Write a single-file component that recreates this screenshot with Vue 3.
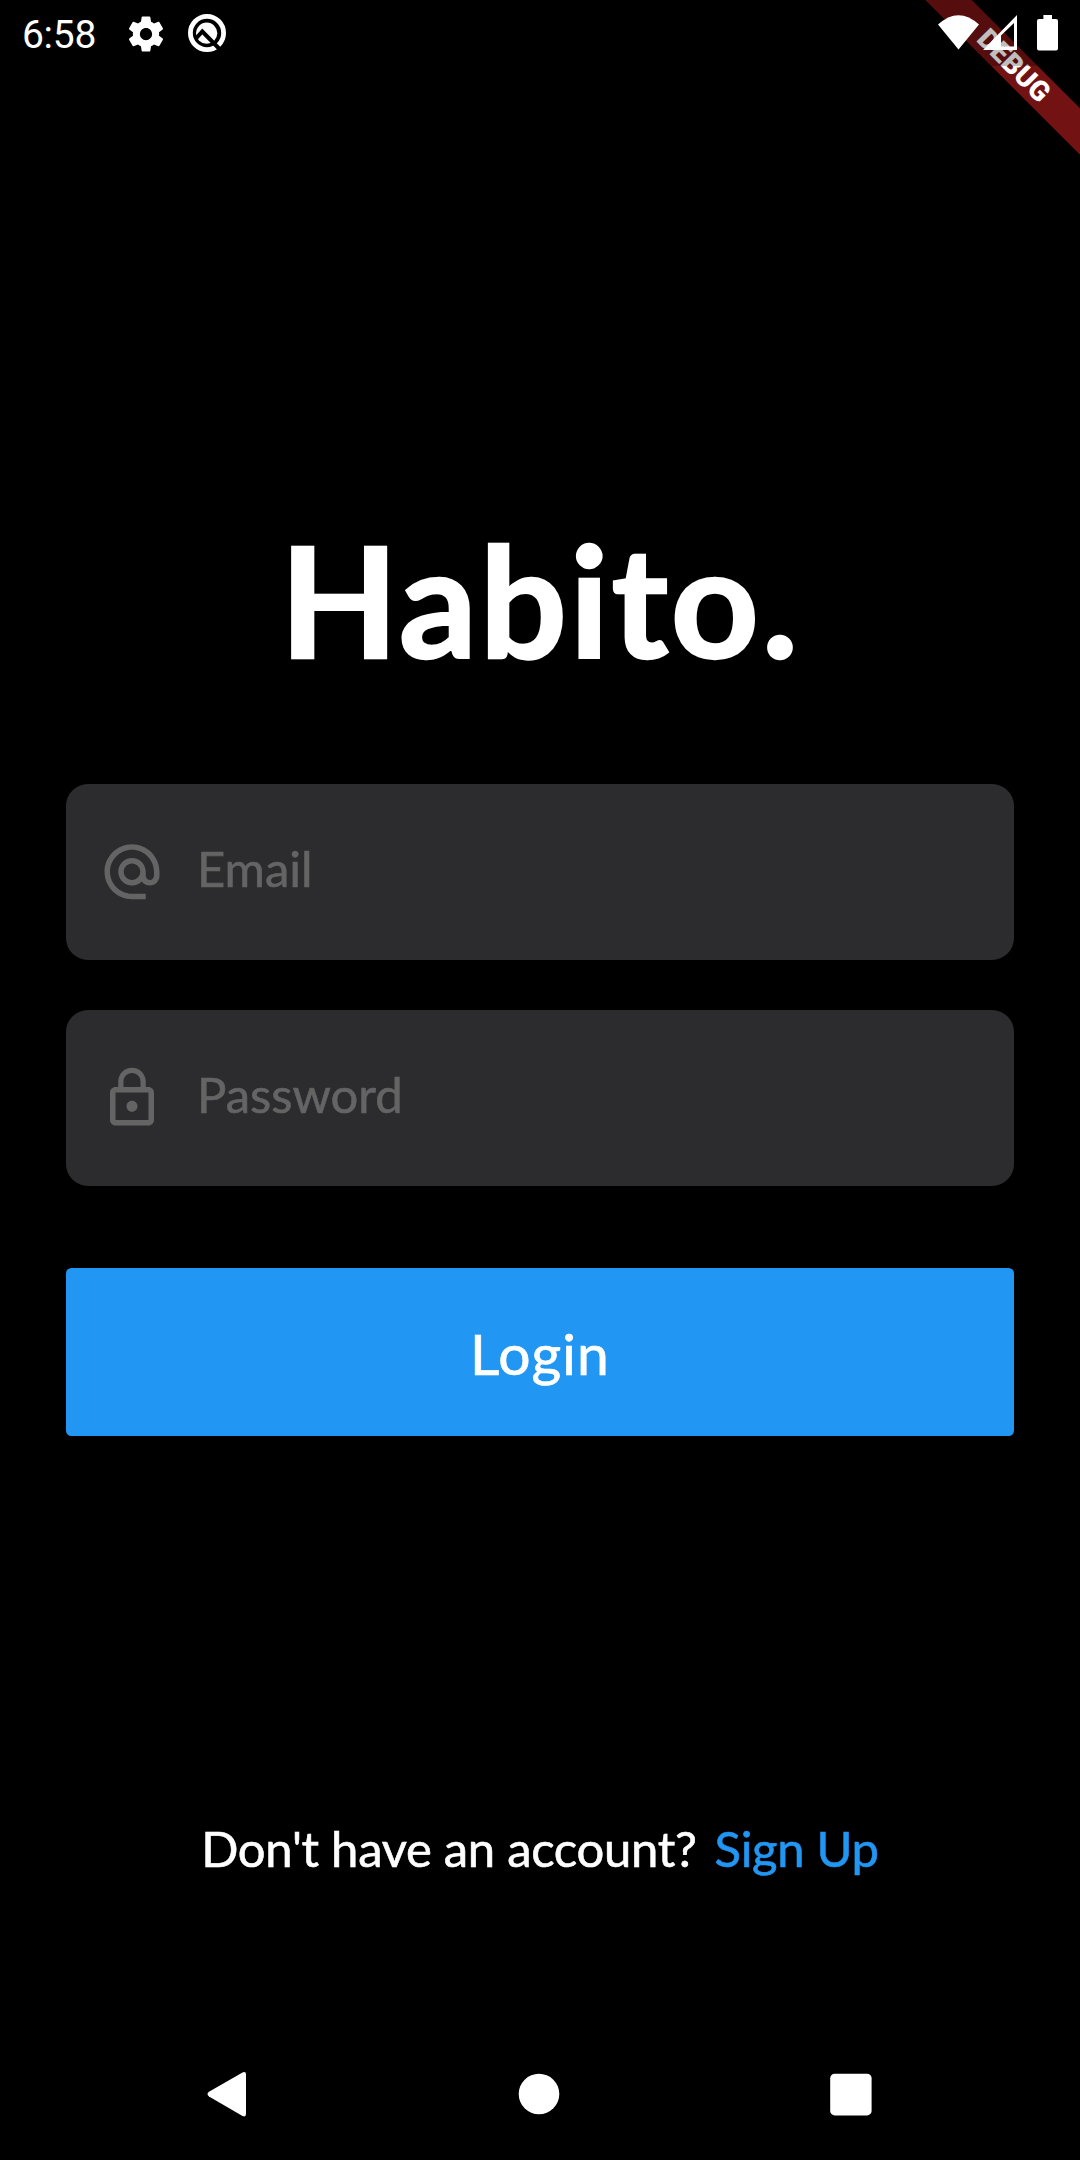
<script setup>
const fields = [
  {
    label: 'Email',
    icon: 'M12 1.95c-5.52 0-10 4.48-10 10s4.48 10 10 10h5v-2h-5c-4.34 0-8-3.66-8-8s3.66-8 8-8 8 3.66 8 8v1.43c0 .79-.71 1.57-1.5 1.57s-1.5-.78-1.5-1.57v-1.43c0-2.76-2.24-5-5-5s-5 2.24-5 5 2.24 5 5 5c1.38 0 2.64-.56 3.54-1.47.65.89 1.77 1.47 2.96 1.47 1.97 0 3.5-1.6 3.5-3.57v-1.43c0-5.52-4.48-10-10-10zm0 13c-1.66 0-3-1.34-3-3s1.34-3 3-3 3 1.34 3 3-1.34 3-3 3z',
  },
  {
    label: 'Password',
    icon: 'M12 17c1.1 0 2-.9 2-2s-.9-2-2-2-2 .9-2 2 .9 2 2 2zm6-9h-1V6c0-2.76-2.24-5-5-5S7 3.24 7 6v2H6c-1.1 0-2 .9-2 2v10c0 1.1.9 2 2 2h12c1.1 0 2-.9 2-2V10c0-1.1-.9-2-2-2zM8.9 6c0-1.71 1.39-3.1 3.1-3.1s3.1 1.39 3.1 3.1v2H8.9V6zM18 20H6V10h12v10z',
  },
]
</script>

<template>
  <div class="screen">
    <div class="banner"><span class="banner-text">DEBUG</span></div>

    <header class="status">
      <span class="time">6:58</span>
      <svg class="gear" viewBox="0 0 24 24"><path fill="#fff" d="M19.43 12.98c.04-.32.07-.64.07-.98s-.03-.66-.07-.98l2.11-1.65c.19-.15.24-.42.12-.64l-2-3.46c-.12-.22-.39-.3-.61-.22l-2.49 1c-.52-.4-1.08-.73-1.69-.98l-.38-2.65C14.46 2.18 14.25 2 14 2h-4c-.25 0-.46.18-.49.42l-.38 2.65c-.61.25-1.17.59-1.69.98l-2.49-1c-.23-.09-.49 0-.61.22l-2 3.46c-.13.22-.07.49.12.64l2.11 1.65c-.04.32-.07.65-.07.98s.03.66.07.98l-2.11 1.65c-.19.15-.24.42-.12.64l2 3.46c.12.22.39.3.61.22l2.49-1c.52.4 1.08.73 1.69.98l.38 2.65c.03.24.24.42.49.42h4c.25 0 .46-.18.49-.42l.38-2.65c.61-.25 1.17-.59 1.69-.98l2.49 1c.23.09.49 0 .61-.22l2-3.46c.12-.22.07-.49-.12-.64l-2.11-1.65zM12 15.5c-1.93 0-3.5-1.57-3.5-3.5s1.57-3.5 3.5-3.5 3.5 1.57 3.5 3.5-1.57 3.5-3.5 3.5z" /></svg>
      <svg class="quick" viewBox="0 0 38 38">
        <circle cx="19" cy="19" r="16.6" fill="none" stroke="#fff" stroke-width="4.8" />
        <circle cx="18.7" cy="19.2" r="10.6" fill="#fff" />
        <path d="M8 24.5L14.3 17.5L32 35.5" fill="none" stroke="#000" stroke-width="4" />
      </svg>
      <svg class="system" viewBox="0 0 120 36">
        <path fill="#fff" d="M0 9.5Q20.5-9.2 41 9.5L20.5 34.5Z" />
        <path fill="#fff" fill-rule="evenodd" d="M45 35L79 0V35ZM63 20.5V31.5H76V8Z" />
        <path fill="#fff" d="M105.4 0h8.6v4h4q2 0 2 2v27.6q0 2-2 2h-17q-2 0-2-2v-27.6q0-2 2-2h4.4z" />
      </svg>
    </header>

    <main class="content">
      <h1 class="title">Habito.</h1>
      <form class="form" @submit.prevent>
        <div v-for="field in fields" :key="field.label" class="field">
          <svg class="field-icon" viewBox="0 0 24 24"><path :d="field.icon" /></svg>
          <span class="hint">{{ field.label }}</span>
        </div>
        <button class="login" type="submit">Login</button>
      </form>
      <p class="signup"><span class="question">Don't have an account?</span><a class="link">Sign Up</a></p>
    </main>

    <nav class="nav">
      <svg viewBox="0 0 48 48"><path fill="#fff" d="M39.5 2.5Q43 1 43 4.500V44Q43 47.500 39.500 46L6 26.500Q3 24 6 21.800Z" /></svg>
      <svg viewBox="0 0 48 48"><circle cx="24" cy="24" r="20.3" fill="#fff" /></svg>
      <svg viewBox="0 0 48 48"><rect x="3.2" y="3.8" width="41.4" height="41.6" rx="4.5" fill="#fff" /></svg>
    </nav>
  </div>
</template>

<style>
body {
  margin: 0;
  background: #000;
}
</style>

<style scoped>
.screen {
  position: relative;
  display: flex;
  flex-direction: column;
  width: 1080px;
  height: 2160px;
  overflow: hidden;
  background: #000;
  color: #fff;
  font-family: Lato, "Open Sans", sans-serif;
}
.banner {
  position: absolute;
  left: 864.15px;
  top: 49.35px;
  width: 300px;
  height: 33px;
  display: flex;
  align-items: center;
  justify-content: center;
  background: #731212;
  transform: rotate(45deg);
}
.banner-text {
  font: 900 28px/33px Roboto, sans-serif;
}
.status {
  position: relative;
  display: flex;
  height: 66px;
  background: rgba(0, 0, 0, 0.25);
}
.time {
  width: 75px;
  margin-left: 22px;
  font: 400 39px/70px Roboto, sans-serif;
  letter-spacing: -0.3px;
}
.gear {
  width: 42px;
  height: 42px;
  margin: 12.5px 0 0 28px;
}
.quick {
  width: 38px;
  height: 38px;
  margin: 14px 0 0 21px;
}
.system {
  width: 120px;
  height: 36px;
  margin: 15px 22px 0 auto;
}
.content {
  display: flex;
  flex-direction: column;
  flex: 1;
  padding: 0 66px;
}
.title {
  margin: 437.5px 0 0;
  height: 190px;
  padding-left: 1px;
  text-align: center;
  font-size: 153.5px;
  line-height: 190px;
  font-weight: 700;
  letter-spacing: 2.8px;
  -webkit-text-stroke: 2.4px currentColor;
  white-space: nowrap;
}
.form {
  display: flex;
  flex-direction: column;
  margin-top: 90.5px;
}
.field {
  display: flex;
  align-items: center;
  height: 176px;
  box-sizing: border-box;
  padding: 0 33px;
  margin-bottom: 49.7px;
  border-radius: 22px;
  background: #2c2c2e;
  color: #646464;
}
.field-icon {
  width: 66px;
  height: 66px;
  fill: currentColor;
}
.hint {
  margin-left: 32px;
  padding-bottom: 7.5px;
  font-size: 49px;
  line-height: 60px;
  -webkit-text-stroke: 0.6px currentColor;
}
.login {
  height: 168px;
  margin-top: 32.6px;
  padding: 0;
  border: 0;
  border-radius: 5.5px;
  background: #2196f3;
  color: #fff;
  font: 400 57px/170px Lato, sans-serif;
  letter-spacing: 1.1px;
  -webkit-text-stroke: 0.7px currentColor;
}
.signup {
  display: flex;
  justify-content: center;
  margin: 382px 0 0;
  font-size: 49px;
  line-height: 60px;
  letter-spacing: -0.3px;
  -webkit-text-stroke: 0.6px currentColor;
  white-space: nowrap;
}
.link {
  margin-left: 18px;
  color: #2196f3;
}
.nav {
  display: flex;
  justify-content: space-between;
  height: 90px;
  padding: 0 205px 0 203px;
}
.nav svg {
  width: 48px;
  height: 48px;
}
</style>
